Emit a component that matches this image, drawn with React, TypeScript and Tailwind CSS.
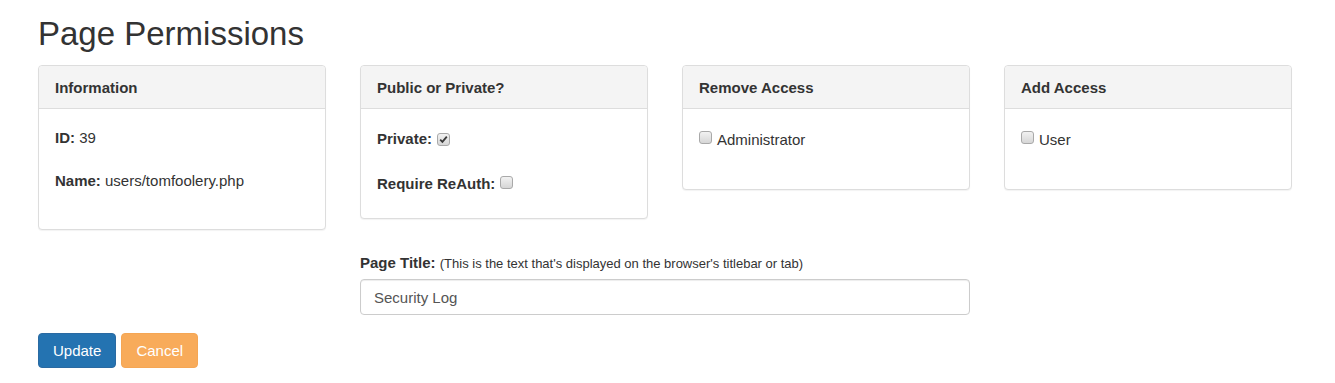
import React from 'react';

// 회색 체크박스 (구형 브라우저 스타일)
const Box: React.FC<{ checked?: boolean; className?: string }> = ({ checked, className = '' }) => (
  <span
    className={`inline-flex items-center justify-center w-[13px] h-[13px] shrink-0 rounded-[3px] border border-[#a9a9a9] bg-gradient-to-b from-[#f2f2f2] to-[#d6d6d6] ${className}`}
  >
    {checked && (
      <svg width="9" height="9" viewBox="0 0 9 9">
        <path d="M1.2 4.6 L3.4 6.8 L7.8 1.6" fill="none" stroke="#3a3a3a" strokeWidth="1.8" />
      </svg>
    )}
  </span>
);

const Panel: React.FC<{ title: string; bodyClass: string; children: React.ReactNode }> = ({
  title,
  bodyClass,
  children,
}) => (
  <div className="bg-white border border-[#dddddd] rounded-[4px] shadow-[0_1px_1px_rgba(0,0,0,0.05)]">
    <div className="h-[43px] flex items-center px-[16px] bg-[#f4f4f4] border-b border-[#dddddd] rounded-t-[4px] font-bold">
      {title}
    </div>
    <div className={`px-[16px] ${bodyClass}`}>{children}</div>
  </div>
);

const App: React.FC = () => {
  return (
    <div className="min-h-[383px] bg-white px-[38px] pt-[16px] text-[15px] leading-[21px] text-[#333333] font-['Liberation_Sans',Arial,sans-serif]">
      <h1 className="text-[33px] leading-[36px] mb-[13px]">Page Permissions</h1>

      <div className="grid grid-cols-4 gap-x-[34px] gap-y-[22px] w-[1254px] items-start">
        {/* 정보 */}
        <Panel title="Information" bodyClass="pt-[18px] pb-[16px]">
          <p className="mb-[22px]">
            <strong>ID:</strong> 39
          </p>
          <p className="mb-[22px]">
            <strong>Name:</strong> users/tomfoolery.php
          </p>
        </Panel>

        {/* 공개 여부 */}
        <Panel title="Public or Private?" bodyClass="pt-[19px] pb-[24px]">
          <div className="flex items-start gap-[5px] font-bold">
            <span>Private:</span>
            <Box checked className="mt-[5px]" />
          </div>
          <div className="flex items-start gap-[5px] font-bold mt-[24px]">
            <span>Require ReAuth:</span>
            <Box className="mt-[3px]" />
          </div>
        </Panel>

        {/* 권한 제거 */}
        <Panel title="Remove Access" bodyClass="pt-[20px] pb-[39px]">
          <div className="flex items-start gap-[5px]">
            <Box className="mt-[2px]" />
            <span>Administrator</span>
          </div>
        </Panel>

        {/* 권한 추가 */}
        <Panel title="Add Access" bodyClass="pt-[20px] pb-[39px]">
          <div className="flex items-start gap-[5px]">
            <Box className="mt-[2px]" />
            <span>User</span>
          </div>
        </Panel>

        {/* 페이지 제목 */}
        <div className="col-start-2 col-span-2">
          <label className="block mb-[5px]">
            <strong>Page Title:</strong>{' '}
            <span className="text-[13px]">(This is the text that's displayed on the browser's titlebar or tab)</span>
          </label>
          <input
            type="text"
            defaultValue="Security Log"
            className="block w-full h-[36px] px-[13px] border border-[#cccccc] rounded-[4px] text-[15px] text-[#555555] shadow-[inset_0_1px_1px_rgba(0,0,0,0.075)] outline-none"
          />
        </div>
      </div>

      <div className="flex gap-[5px] mt-[18px]">
        <button className="h-[35px] px-[14px] rounded-[4px] bg-[#2473b1] border border-[#2a6aa2] text-white">
          Update
        </button>
        <button className="h-[35px] px-[14px] rounded-[4px] bg-[#f8ab5a] border border-[#f5a654] text-white">
          Cancel
        </button>
      </div>
    </div>
  );
};

export default App;
